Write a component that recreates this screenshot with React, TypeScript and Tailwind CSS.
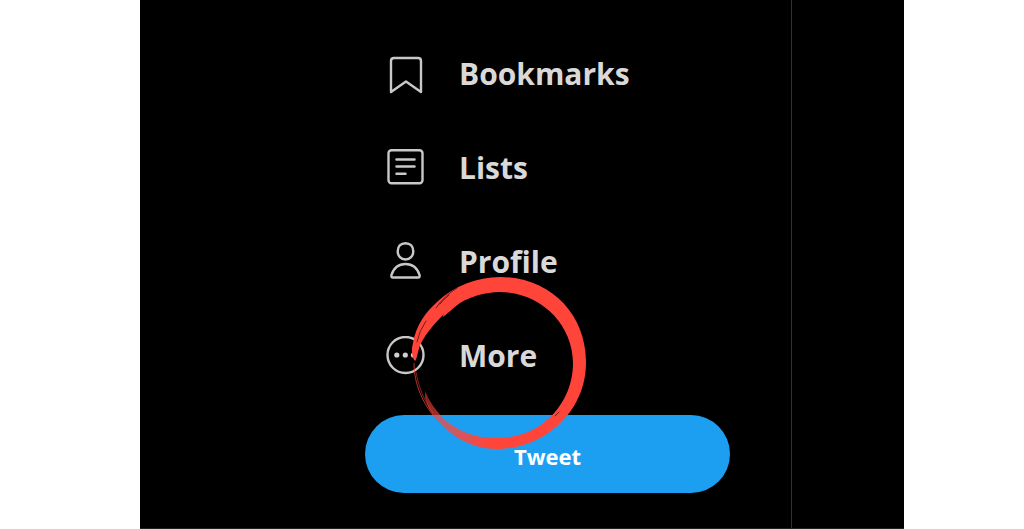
import React from "react";

const iconClass = "w-10 h-10 shrink-0 fill-none stroke-[#c8c8c8] stroke-[2.4]"

const items = [
  {
    label: 'Bookmarks',
    icon: (
      <svg viewBox="0 0 40 40" className={iconClass} aria-hidden="true">
        <path d="M5 38 V7 Q5 4 8 4 H32 Q35 4 35 7 V38 L20 27.500 Z" strokeLinejoin="round" />
      </svg>
    ),
  },
  {
    label: 'Lists',
    icon: (
      <svg viewBox="0 0 40 40" className={iconClass} aria-hidden="true">
        <rect x="2.500" y="2.200" width="34" height="33" rx="3" />
        <path d="M10.500 11.500 H28.500 M10.500 18.500 H28.500 M10.500 25.800 H19.500" strokeWidth="2.500" strokeLinecap="round" />
      </svg>
    ),
  },
  {
    label: 'Profile',
    icon: (
      <svg viewBox="0 0 40 40" className={iconClass} aria-hidden="true">
        <path d="M19.500 1.200 C24.300 1.200 27.300 4.500 27.300 9.200 C27.300 14 24 17.500 19.500 17.500 C15 17.500 11.700 14 11.700 9.200 C11.700 4.500 14.700 1.200 19.500 1.200 Z" />
        <path d="M7 35.500 C5.500 35.500 5 34.500 5.500 33 C7.500 26.500 12.500 22 19.500 22 C26.500 22 31.500 26.500 33.500 33 C34 34.500 33.500 35.500 32 35.500 Z" />
      </svg>
    ),
  },
  {
    label: 'More',
    icon: (
      <svg viewBox="0 0 40 40" className={iconClass} aria-hidden="true">
        <circle cx="19.500" cy="19" r="18" />
        <g className="fill-[#d0d0d0] stroke-none">
          <circle cx="10.800" cy="19" r="2.600" />
          <circle cx="19.300" cy="19" r="2.600" />
          <circle cx="27.500" cy="19" r="2.600" />
        </g>
      </svg>
    ),
  },
]

// hand-drawn brush stroke around the last menu item
function BrushCircle() {
  return (
    <svg viewBox="408 273 182 180" className="absolute left-[43px] top-[273px] w-[182px] h-[180px] pointer-events-none" aria-hidden="true">
      <defs>
        <linearGradient id="brush" gradientUnits="userSpaceOnUse" x1="420" y1="400" x2="490" y2="445">
          <stop offset="0" stopColor="#ff453a" stopOpacity="0.5" />
          <stop offset="1" stopColor="#ff453a" />
        </linearGradient>
      </defs>
      <path
        fill="#ff453a"
        d="M415 361 C412 358 411 350 413 343 C416 325 426 312 437 302 C454 286 477 277 500 277 C549 277 586 313 586 362 C586 393 571 414 556 427 L545 422 C563 407 573 386 573 363 C573 324 540 292 500 292 C484 292 470 297 460 303 C452 309 447 314 443 317 C442 317 444 314 445 313 C434 324 421 338 418 352 C417 357 416 360 415 361 Z"
      />
      <path
        fill="url(#brush)"
        d="M558 425 C541 441 519 449 497 449 C471 449 451 436 437 420 C430 412 427 405 425 398 L425 391 C429 401 435 409 441 416 C456 431 474 438 497 438 C517 438 535 431 547 420 Z"
      />
      <g fill="none" stroke="#ff453a">
        <path d="M414 363 C414 384 423 405 438 421" strokeWidth="0.900" opacity="0.800" />
        <path d="M416 372 C419 389 425 402 433 413" strokeWidth="1" opacity="0.500" />
      </g>
      <g fill="none" stroke="#4d1210" strokeWidth="0.800" strokeLinecap="round">
        <path d="M457 288 Q444 296 436 308" />
        <path d="M449 295 Q444 299 440 304" />
        <path d="M426 321 Q419 331 417 342" />
        <path d="M555 416 L559 412" />
      </g>
    </svg>
  )
}

export default function App() {
  return (
    <div className="min-h-screen flex bg-white pl-[140px] pr-[120px] font-['Open_Sans','Noto_Sans',sans-serif] font-bold">
      <div className="flex flex-1 bg-black border-b border-[#202020]">
        <aside className="flex-1 flex justify-end pr-[61px] border-r border-[#2f3336]">
          <div className="relative w-[365px] pt-[27px]">
            <nav className="flex flex-col text-[#d9d9d9] text-[30px] leading-10">
              {items.map((item) => (
                <a key={item.label} href="#" className="flex items-center gap-[33px] h-[94px] pl-[21px]">
                  {item.icon}
                  <span>{item.label}</span>
                </a>
              ))}
            </nav>
            <button type="button" className="w-full h-[78px] mt-3 pt-1 rounded-full bg-[#1d9ff1] text-white text-[22px] leading-8 cursor-pointer">
              Tweet
            </button>
            <BrushCircle />
          </div>
        </aside>
        <div className="w-28" />
      </div>
    </div>
  );
}
